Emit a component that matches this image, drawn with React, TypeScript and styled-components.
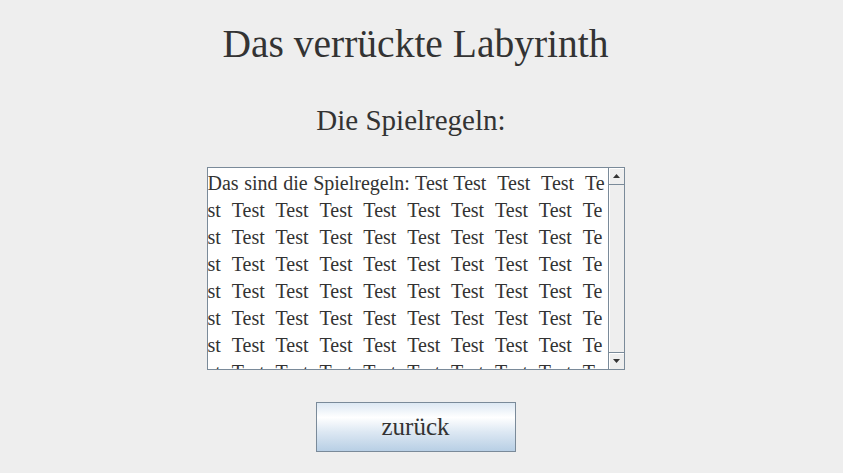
import React from "react";
import styled, { createGlobalStyle } from "styled-components";

const GlobalStyle = createGlobalStyle`
  html, body {
    margin: 0;
    padding: 0;
    background: #eeeeee;
    width: 843px;
    height: 473px;
    overflow: hidden;
  }
`;

const Page = styled.main`
  width: 831px;
  height: 473px;
  display: flex;
  flex-direction: column;
  align-items: center;
  font-family: "Liberation Serif", "Times New Roman", serif;
  color: #333333;
`;

const Title = styled.h1`
  margin: 24px 0 0;
  font-size: 39.5px;
  line-height: 40px;
  font-weight: normal;
  white-space: nowrap;
`;

const Subtitle = styled.h2`
  margin: 42px 0 0;
  padding-right: 9px;
  font-size: 29px;
  line-height: 29px;
  font-weight: normal;
  white-space: nowrap;
`;

const ScrollPane = styled.div`
  margin-top: 32px;
  width: 418px;
  height: 203px;
  box-sizing: border-box;
  border: 1px solid #7a8a99;
  background: #ffffff;
  display: flex;
  overflow: hidden;
`;

const TextArea = styled.div`
  width: 400px;
  flex: none;
  padding-top: 2px;
  font-size: 20px;
  line-height: 27px;
  word-spacing: 0.6px;
  overflow: hidden;
`;

const TextLine = styled.div`
  white-space: pre;
  overflow: hidden;
`;

const ScrollBar = styled.div`
  flex: 1;
  display: flex;
  flex-direction: column;
  background: #eeeeee;
  border-left: 1px solid #7a8a99;
`;

const ArrowButton = styled.div<{ $dir: "up" | "down" }>`
  height: 16px;
  flex: none;
  display: flex;
  align-items: center;
  justify-content: center;
  background: #eeeeee;
  box-shadow: inset 1px 1px 0 #ffffff;
  ${(p) =>
    p.$dir === "up"
      ? "border-bottom: 1px solid #7a8a99;"
      : "border-top: 1px solid #7a8a99;"}
`;

const Track = styled.div`
  flex: 1;
  background: #eeeeee;
  box-shadow: inset 1px 0 0 #ffffff;
`;

const Button = styled.button`
  margin-top: 32px;
  width: 200px;
  height: 50px;
  box-sizing: border-box;
  border: 1px solid #7a8a99;
  background: linear-gradient(
    to bottom,
    #dde8f3 0%,
    #ffffff 30%,
    #dde8f3 60%,
    #b8cfe5 100%
  );
  font-family: "Liberation Serif", "Times New Roman", serif;
  font-size: 25px;
  color: #333333;
  padding: 0;
  cursor: pointer;
`;

const Arrow = ({ dir }: { dir: "up" | "down" }) => (
  <svg width="7" height="4" viewBox="0 0 7 4">
    {dir === "up" ? (
      <polygon points="3.5,0 7,4 0,4" fill="#333333" />
    ) : (
      <polygon points="0,0 7,0 3.5,4" fill="#333333" />
    )}
  </svg>
);

const lines = [
  "Das sind die Spielregeln: Test Test  Test  Test  Te",
  ...Array.from(
    { length: 7 },
    () => "st  Test  Test  Test  Test  Test  Test  Test  Test  Te"
  ),
];

export default function App() {
  return (
    <>
      <GlobalStyle />
      <Page>
        <Title>Das verrückte Labyrinth</Title>
        <Subtitle>Die Spielregeln:</Subtitle>
        <ScrollPane>
          <TextArea>
            {lines.map((l, i) => (
              <TextLine key={i}>{l}</TextLine>
            ))}
          </TextArea>
          <ScrollBar>
            <ArrowButton $dir="up">
              <Arrow dir="up" />
            </ArrowButton>
            <Track />
            <ArrowButton $dir="down">
              <Arrow dir="down" />
            </ArrowButton>
          </ScrollBar>
        </ScrollPane>
        <Button>zurück</Button>
      </Page>
    </>
  );
}
